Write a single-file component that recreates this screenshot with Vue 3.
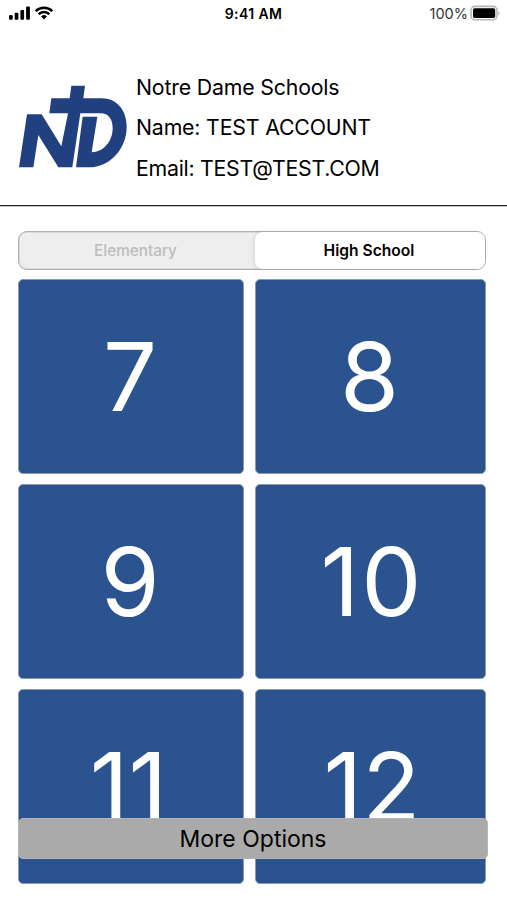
<script setup>
const grades = [7, 8, 9, 10, 11, 12]
const account = [
  { id: 'school', text: 'Notre Dame Schools' },
  { id: 'name', text: 'Name: TEST ACCOUNT' },
  { id: 'email', text: 'Email: TEST@TEST.COM' },
]
</script>

<template>
  <div class="screen">
    <div class="status">
      <div class="signal">
        <svg width="50" height="28" viewBox="0 0 50 28">
          <rect x="9" y="15" width="3.7" height="4.7" rx="1" />
          <rect x="14.7" y="12.8" width="3.7" height="6.9" rx="1" />
          <rect x="20.4" y="10" width="3.7" height="9.7" rx="1" />
          <rect x="26.1" y="6.6" width="3.8" height="13.1" rx="1" />
        </svg>
        <svg class="wifi" width="20" height="28" viewBox="0 0 20 28">
          <path d="M1.7 11.1 A12 12 0 0 1 18.3 11.1" />
          <path d="M4.7 14.2 A7.6 7.6 0 0 1 15.3 14.2" />
          <path class="dot" d="M7.1 16.5 A4.2 4.2 0 0 1 12.9 16.5 L10 19.6 Z" />
        </svg>
      </div>
      <span class="time">9:41 AM</span>
      <div class="power">
        <span>100%</span>
        <svg width="32" height="28" viewBox="0 0 32 28">
          <rect x="1" y="6.4" width="26" height="13.4" rx="4" fill="#fff" stroke="#b6b6b6" stroke-width="1.6" />
          <rect x="3" y="8.3" width="22.2" height="9.6" rx="1.6" />
          <path d="M28.4 10.8 Q31 13 28.4 15.6 Z" fill="#b6b6b6" />
        </svg>
      </div>
    </div>

    <header class="header">
      <svg class="logo" width="108" height="84" viewBox="28 30 324 252">
        <path d="M52 118 H96 L155 214 L175 115 H119 L125 70 H180 L185 32 H226 L221 70 H275 C325 70 351 110 351 155 C351 222 300 277 238 277 H199 L219 125 H263 L246 232 C282 232 309 198 309 160 C309 133 297 115 272 115 H212 L188 277 H146 L86 180 L71 277 H28 Z" />
      </svg>
      <div class="account">
        <div v-for="line in account" :key="line.id" :class="line.id">{{ line.text }}</div>
      </div>
    </header>

    <main class="main">
      <div class="segments">
        <button class="segment">Elementary</button>
        <button class="segment active">High School</button>
      </div>
      <div class="grid">
        <button v-for="grade in grades" :key="grade" class="card" :class="'grade-' + grade">{{ grade }}</button>
      </div>
      <button class="more">More Options</button>
    </main>
  </div>
</template>

<style>
body {
  background: #fff;
  overflow: hidden;
}
</style>

<style scoped>
.screen {
  box-sizing: border-box;
  height: 900px;
  overflow: hidden;
  font-family: Inter, "Liberation Sans", sans-serif;
  color: #000;
}
button {
  box-sizing: border-box;
  margin: 0;
  padding: 0;
  font-family: inherit;
}
.status {
  display: grid;
  grid-template-columns: 1fr auto 1fr;
  height: 28px;
  line-height: 28px;
  font-size: 14px;
}
.signal {
  display: flex;
}
.wifi {
  margin-left: -16px;
  fill: none;
  stroke: #000;
  stroke-width: 2.6;
}
.wifi .dot {
  fill: #000;
  stroke: none;
}
.time {
  font-weight: 600;
  letter-spacing: 0.4px;
}
.power {
  display: flex;
  justify-content: flex-end;
  gap: 2px;
  padding-right: 5px;
  font-size: 14.5px;
  color: #333;
}
.header {
  box-sizing: border-box;
  display: flex;
  height: 178px;
  padding: 57px 0 0 19px;
  border-bottom: 1px solid #222;
  box-shadow: 0 1px #c4c4c4;
}
.logo {
  fill: #21407f;
}
.account {
  margin: -18px 0 0 9px;
  font-size: 21.3px;
  line-height: 40.3px;
  letter-spacing: -0.18px;
  white-space: nowrap;
}
.email {
  letter-spacing: -0.26px;
}
.main {
  position: relative;
  padding: 25px 21px 0 18px;
}
.segments {
  display: grid;
  grid-template-columns: 236px 1fr;
  box-sizing: border-box;
  height: 39px;
  border: 1px solid #b0b2b1;
  border-radius: 9px;
  background: #eee;
  box-shadow: inset 0 0 0 0.5px #c4c6c5;
}
.segment {
  padding-right: 3px;
  border: 0;
  border-radius: 8px;
  background: none;
  font-size: 15.3px;
  font-weight: 500;
  color: #bcbcbc;
}
.segment.active {
  padding-right: 2px;
  background: #fff;
  box-shadow: -1px 0 4px rgba(0, 0, 0, 0.1);
  font-size: 15.6px;
  font-weight: 600;
  color: #000;
}
.grid {
  display: grid;
  grid-template-columns: 226px 231px;
  grid-auto-rows: 195px;
  gap: 10px 11px;
  margin-top: 9px;
}
.card {
  padding-right: 2px;
  border: 1px solid #8e99a8;
  border-radius: 5px;
  background: #2a5390;
  color: #fff;
  font-size: 95.5px;
  line-height: 1;
}
.grade-10 {
  padding: 0 0 0 3px;
  letter-spacing: 2px;
}
.grade-11 {
  padding-right: 5px;
}
.grade-12 {
  padding: 0 0 0 3px;
}
.more {
  position: absolute;
  left: 18px;
  top: 612px;
  width: 470px;
  height: 41px;
  border: 1px solid #b4b4b4;
  border-radius: 5px;
  background: #aaa;
  color: #000;
  font-size: 23px;
}
</style>
